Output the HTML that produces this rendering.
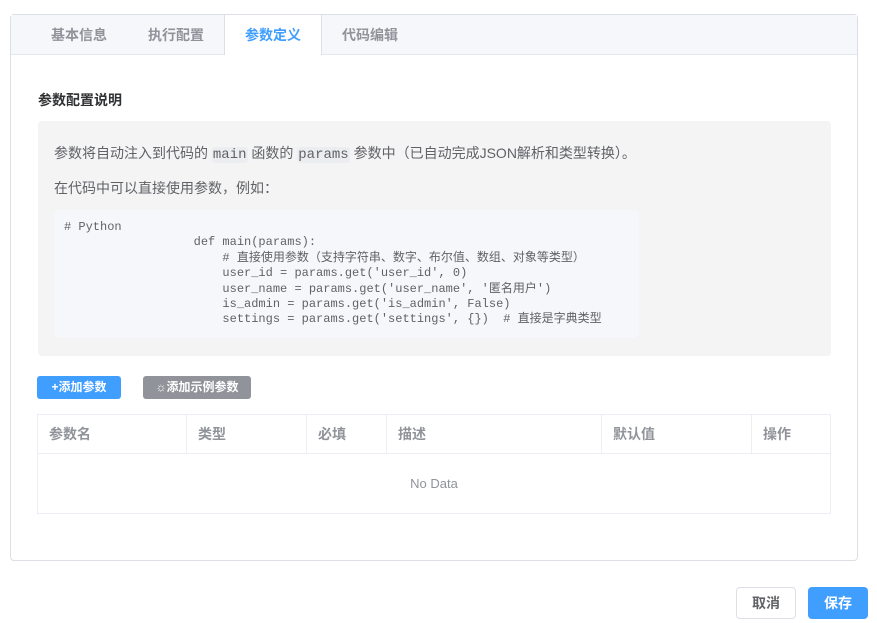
<!DOCTYPE html>
<html><head><meta charset="utf-8"><style>
*{box-sizing:border-box;margin:0;padding:0}
body{width:877px;height:623px;background:#fff;font-family:"Liberation Sans","Noto Sans CJK SC",sans-serif;position:relative;overflow:hidden;color:#303133}
.card{position:absolute;left:10px;top:14px;width:848px;height:547px;border:1px solid #dcdfe6;border-radius:4px;background:#fff}
.tabs{height:40px;background:#f5f7fa;border-bottom:1px solid #e4e7ed;position:relative}
.tab{position:absolute;top:0;height:40px;line-height:40px;font-size:14px;font-weight:bold;color:#909399}
.tab.act{background:#fff;color:#409eff;border-left:1px solid #dcdfe6;border-right:1px solid #dcdfe6;height:40px;text-align:center}
.h{position:absolute;left:27px;top:75px;font-size:14px;font-weight:bold;color:#303133}
.box{position:absolute;left:27px;top:106px;width:793px;height:235px;background:#f4f4f5;border-radius:4px}
.p{position:absolute;left:16px;font-size:14px;color:#606266}
code{font-family:"Liberation Mono","Noto Sans CJK SC",monospace;background:#ebedf0;padding:0 1px;border-radius:3px}
.pre{position:absolute;left:16px;top:89px;width:585px;height:128px;background:#f6f7fa;border-radius:4px;font-family:"Liberation Mono","Noto Sans CJK SC",monospace;font-size:12px;color:#606266;white-space:pre;line-height:15.4px;padding:10px}
.btn{position:absolute;top:361px;height:23px;line-height:23px;font-size:12px;font-weight:bold;color:#fff;border-radius:3px;text-align:center}
table{position:absolute;left:26px;top:399px;width:794px;border-collapse:collapse;font-size:14px}
th{height:39px;text-align:left;padding-left:11px;color:#909399;font-weight:bold;border:1px solid #ebeef5}
td{height:60px;text-align:center;color:#909399;font-size:13px;border:1px solid #ebeef5}
.fb{position:absolute;top:587px;height:32px;line-height:30px;font-size:14px;font-weight:bold;border-radius:4px;text-align:center}
</style></head><body>
<div class="card">
<div class="tabs">
<div class="tab" style="left:40px">基本信息</div>
<div class="tab" style="left:137px">执行配置</div>
<div class="tab act" style="left:213px;width:98px">参数定义</div>
<div class="tab" style="left:331px">代码编辑</div>
</div>
<div class="h">参数配置说明</div>
<div class="box">
<div class="p" style="top:22px">参数将自动注入到代码的 <code>main</code> 函数的 <code>params</code> 参数中（已自动完成JSON解析和类型转换）。</div>
<div class="p" style="top:57px">在代码中可以直接使用参数，例如：</div>
<div class="pre"># Python
                  def main(params):
                      # 直接使用参数（支持字符串、数字、布尔值、数组、对象等类型）
                      user_id = params.get('user_id', 0)
                      user_name = params.get('user_name', '匿名用户')
                      is_admin = params.get('is_admin', False)
                      settings = params.get('settings', {})  # 直接是字典类型</div>
</div>
<div class="btn" style="left:26px;width:84px;background:#409eff">+添加参数</div>
<div class="btn" style="left:132px;width:108px;background:#909399">☼添加示例参数</div>
<table><tr><th style="width:149px">参数名</th><th style="width:120px">类型</th><th style="width:80px">必填</th><th style="width:215px">描述</th><th style="width:150px">默认值</th><th>操作</th></tr>
<tr><td colspan="6">No Data</td></tr></table>
</div>
<div class="fb" style="left:736px;width:60px;border:1px solid #dcdfe6;color:#606266;background:#fff">取消</div>
<div class="fb" style="left:808px;width:60px;background:#409eff;color:#fff;line-height:32px">保存</div>
</body></html>
